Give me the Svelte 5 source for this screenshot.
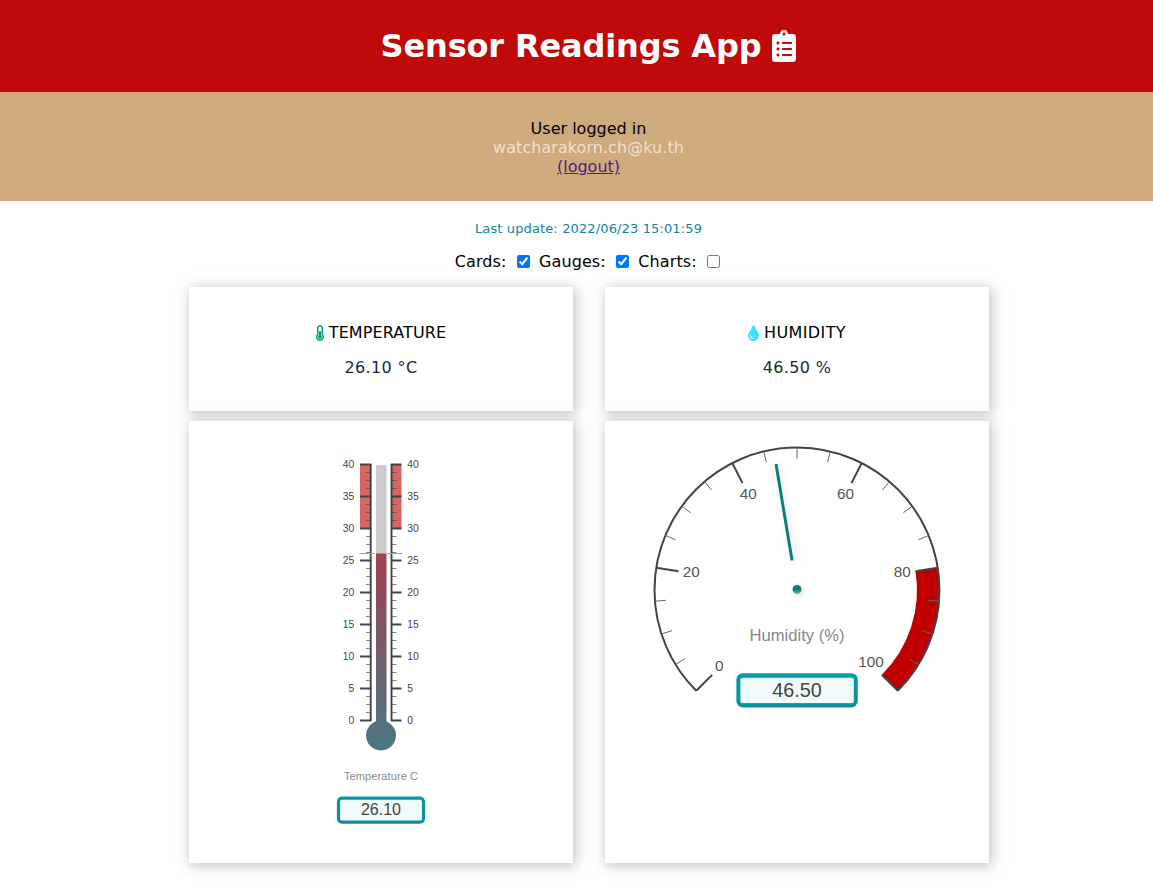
<script>
  let cards = $state(true);
  let gauges = $state(true);
  let charts = $state(false);

  const temperature = 26.1;
  const humidity = 46.5;

  // Thermometer scale: 0 to 40 degrees over 256 px
  const tempY = (v) => 720.5 - v * 6.4;
  const tempMajor = [0, 5, 10, 15, 20, 25, 30, 35, 40];
  const tempMinor = Array.from({ length: 33 }, (_, i) => i * 1.25).filter((v) => v % 5 !== 0);

  // Dial scale: 0 to 100 percent over 270 degrees
  const cx = 797;
  const cy = 590;
  const radius = 142.5;
  const polar = (v, r) => {
    const a = ((-135 + v * 2.7) * Math.PI) / 180;
    return [cx + r * Math.sin(a), cy - r * Math.cos(a)];
  };
  const ray = (v, r1, r2) => `M${polar(v, r1).join(' ')}L${polar(v, r2).join(' ')}`;
  const dialMajor = [0, 20, 40, 60, 80, 100];
  const dialMinor = Array.from({ length: 21 }, (_, i) => i * 5).filter((v) => v % 20 !== 0);
  const dialLabels = [
    [0, 719.3, 671], [20, 691.3, 577.3], [40, 748.3, 499], [60, 845.5, 499], [80, 902.3, 577.3], [100, 871, 667]
  ];
  const arc = `M${polar(0, radius).join(' ')}A${radius} ${radius} 0 1 1 ${polar(100, radius).join(' ')}`;
  const zone = `M${polar(80, radius).join(' ')}A${radius} ${radius} 0 0 1 ${polar(100, radius).join(' ')}L${polar(100, 120).join(' ')}A120 120 0 0 0 ${polar(80, 120).join(' ')}Z`;
</script>

<div class="page">
  <header>
    <h1>
      <span>Sensor Readings App</span>
      <svg width="24" height="32" viewBox="0 0 384 512"><path fill="#fff" d="M336 64h-80c0-35.3-28.7-64-64-64s-64 28.7-64 64H48C21.5 64 0 85.5 0 112v352c0 26.5 21.5 48 48 48h288c26.5 0 48-21.5 48-48V112c0-26.5-21.5-48-48-48zM96 424c-13.3 0-24-10.7-24-24s10.7-24 24-24 24 10.7 24 24-10.7 24-24 24zm0-96c-13.3 0-24-10.7-24-24s10.7-24 24-24 24 10.7 24 24-10.7 24-24 24zm0-96c-13.3 0-24-10.7-24-24s10.7-24 24-24 24 10.7 24 24-10.7 24-24 24zm96-192c13.3 0 24 10.7 24 24s-10.7 24-24 24-24-10.7-24-24 10.7-24 24-24zm128 368c0 4.4-3.6 8-8 8H168c-4.4 0-8-3.6-8-8v-16c0-4.4 3.6-8 8-8h144c4.4 0 8 3.6 8 8v16zm0-96c0 4.4-3.6 8-8 8H168c-4.4 0-8-3.6-8-8v-16c0-4.4 3.6-8 8-8h144c4.4 0 8 3.6 8 8v16zm0-96c0 4.4-3.6 8-8 8H168c-4.4 0-8-3.6-8-8v-16c0-4.4 3.6-8 8-8h144c4.4 0 8 3.6 8 8v16z" /></svg>
    </h1>
  </header>

  <section class="user">
    <div>User logged in</div>
    <div class="email">watcharakorn.ch@ku.th</div>
    <a href="#logout">(logout)</a>
  </section>

  <p class="update">Last update: 2022/06/23 15:01:59</p>

  <div class="toggles">
    <label><span>Cards:</span><input type="checkbox" bind:checked={cards} /></label>
    <label><span>Gauges:</span><input type="checkbox" bind:checked={gauges} /></label>
    <label><span>Charts:</span><input type="checkbox" bind:checked={charts} /></label>
  </div>

  {#if cards}
    <div class="grid">
      <div class="card reading">
        <p class="name">
          <svg width="8" height="16" viewBox="0 0 256 512"><path fill="#059e8a" d="M192 384c0 35.346-28.654 64-64 64s-64-28.654-64-64c0-23.685 12.876-44.349 32-55.417V224c0-17.673 14.327-32 32-32s32 14.327 32 32v104.583c19.124 11.068 32 31.732 32 55.417zm32-84.653c19.912 22.563 32 52.194 32 84.653 0 70.696-57.303 128-128 128-.299 0-.609-.001-.909-.003C56.789 511.509-.357 453.636 0 383.333.166 351.135 12.225 321.755 32 299.347V96c0-53.019 42.981-96 96-96s96 42.981 96 96v203.347zM208 384c0-34.339-19.37-52.19-32-66.502V96c0-26.467-21.533-48-48-48S80 69.533 80 96v221.498c-12.732 14.428-31.825 32.1-31.999 66.08-.224 43.876 35.563 80.116 79.423 80.42L128 464c44.112 0 80-35.888 80-80z" /></svg>
          <span class="tname">TEMPERATURE</span>
        </p>
        <p class="value">{temperature.toFixed(2)} °C</p>
      </div>
      <div class="card reading">
        <p class="name">
          <svg width="11" height="16" viewBox="0 0 352 512"><path fill="#40dfff" d="M205.22 22.09c-7.94-28.78-49.44-30.12-58.44 0C100.01 179.85 0 222.72 0 333.91 0 432.35 78.72 512 176 512s176-79.65 176-178.09c0-111.75-99.79-153.34-146.78-311.82zM176 448c-61.75 0-112-50.25-112-112 0-8.84 7.16-16 16-16s16 7.16 16 16c0 44.11 35.89 80 80 80 8.84 0 16 7.16 16 16s-7.16 16-16 16z" /></svg>
          <span class="hname">HUMIDITY</span>
        </p>
        <p class="value">{humidity.toFixed(2)} %</p>
      </div>
    </div>
  {/if}

  {#if gauges}
    <div class="grid gauges">
      <div class="card gauge">
        <svg width="384" height="442" viewBox="189 421 384 442">
          <defs>
            <linearGradient id="mercury" gradientUnits="userSpaceOnUse" x1="0" y1="553" x2="0" y2="751">
              <stop offset="0" stop-color="#a04050" />
              <stop offset="1" stop-color="#4a7885" />
            </linearGradient>
            <linearGradient id="rim" x1="0" y1="0" x2="0" y2="1">
              <stop offset="0" stop-color="#009ba3" />
              <stop offset="1" stop-color="#158c98" />
            </linearGradient>
          </defs>
          <rect x="360" y="464.5" width="11" height="64" fill="#d96464" />
          <rect x="391" y="464.5" width="10.5" height="64" fill="#d96464" />
          <rect x="376" y="465" width="10.5" height="89" fill="#ccc" />
          <rect x="376" y="553.5" width="10.5" height="175" fill="url(#mercury)" />
          <circle cx="381" cy="735.5" r="15" fill="url(#mercury)" />
          <path d="M370.7 464V721M391.5 464V721" stroke="#444" stroke-width="1.9" fill="none" />
          {#each tempMinor as v}
            <path d="M366 {tempY(v)}h4.5M392 {tempY(v)}h4.5" stroke="#444" stroke-opacity=".65" stroke-width="1.1" />
          {/each}
          {#each tempMajor as v}
            <path d="M360 {tempY(v)}h11.3M391 {tempY(v)}h10.5" stroke="#444" stroke-width="1.9" />
            <text x="354.3" y={tempY(v) + 3.3} text-anchor="end" class="tick">{v}</text>
            <text x="407.3" y={tempY(v) + 3.3} class="tick">{v}</text>
          {/each}
          <rect x="359.5" y="553" width="15" height="1" fill="#f08080" />
          <rect x="387.5" y="553" width="15" height="1" fill="#f08080" />
          <text x="381" y="780" text-anchor="middle" class="tlabel" textLength="74">Temperature C</text>
          <rect x="338.5" y="798.2" width="85" height="24" rx="3.5" fill="#f1fbfc" stroke="url(#rim)" stroke-width="3.2" />
          <text x="381" y="815.2" text-anchor="middle" class="tvalue">{temperature.toFixed(2)}</text>
        </svg>
      </div>
      <div class="card gauge">
        <svg width="384" height="442" viewBox="605 421 384 442">
          <defs>
            <linearGradient id="pin" x1="0" y1="0" x2="0" y2="1">
              <stop offset=".5" stop-color="#008080" />
              <stop offset="1" stop-color="#80b8b8" />
            </linearGradient>
            <linearGradient id="rim2" x1="0" y1="0" x2="0" y2="1">
              <stop offset="0" stop-color="#009ba3" />
              <stop offset="1" stop-color="#0a929c" />
            </linearGradient>
            <filter id="soft" x="-200%" y="-50%" width="500%" height="200%">
              <feDropShadow dx="2" dy="2" stdDeviation="3" flood-color="#bc8f8f" flood-opacity=".3" />
            </filter>
          </defs>
          <path d={zone} fill="#c00000" />
          <path d={arc} fill="none" stroke="#444" stroke-width="2" />
          {#each dialMinor as v}
            <path d={ray(v, 131.5, radius)} stroke="#666" stroke-width="1" />
          {/each}
          {#each dialMajor as v}
            <path d={ray(v, 120, radius)} stroke="#444" stroke-width="2" />
          {/each}
          {#each dialLabels as [v, x, y]}
            <text {x} {y} text-anchor="middle" class="dtick">{v}</text>
          {/each}
          <path d={ray(humidity, 30, 127.7)} stroke="#008080" stroke-width="3" filter="url(#soft)" />
          <circle {cx} cy="589.5" r="4.5" fill="url(#pin)" filter="url(#soft)" />
          <text x="797" y="641" text-anchor="middle" class="dlabel">Humidity (%)</text>
          <rect x="738.4" y="675.2" width="117.4" height="30.2" rx="4.5" fill="#f1fbfc" stroke="url(#rim2)" stroke-width="4" />
          <path d="M741 677.7h112.5M741 703.5h112.5" stroke="#356f75" stroke-width="1" stroke-opacity=".65" />
          <text x="797" y="697" text-anchor="middle" class="dvalue">{humidity.toFixed(2)}</text>
        </svg>
      </div>
    </div>
  {/if}
</div>

<style>
  :global(body) {
    margin: 0;
    overflow: hidden;
    background: #fff;
  }
  .page {
    width: 1177px;
    height: 885px;
    font: 16px/19px "DejaVu Sans", sans-serif;
    color: #000;
    text-align: center;
  }
  header {
    height: 92px;
    background: #c00a0a;
    color: #fff;
  }
  h1 {
    margin: 0;
    height: 92px;
    display: flex;
    align-items: center;
    justify-content: center;
    gap: 11px;
    font-size: 32px;
    line-height: 38px;
    letter-spacing: -0.15px;
  }
  .user {
    box-sizing: border-box;
    height: 109px;
    padding-top: 27px;
    background: #cfaa7c;
  }
  .email {
    color: #f0dfd0;
    letter-spacing: 0.06px;
  }
  a { color: #551a8b; }
  .update {
    margin: 20px 0 0;
    font-size: 13px;
    line-height: 16px;
    letter-spacing: 0.13px;
    color: #1282a2;
  }
  .toggles {
    display: flex;
    justify-content: center;
    gap: 9px;
    width: 1175px;
    height: 20px;
    margin-top: 14px;
    letter-spacing: 0.1px;
  }
  label {
    display: flex;
    align-items: center;
    gap: 10.5px;
  }
  input {
    margin: 0;
    width: 13px;
    height: 13px;
  }
  .grid {
    display: grid;
    grid-template-columns: 384px 384px;
    gap: 32px;
    justify-content: center;
    width: 800px;
    margin: 16px 0 0 189px;
  }
  .gauges { margin-top: 10px; }
  .card {
    background: #fff;
    box-shadow: 2px 2px 12px 1px rgba(140, 140, 140, 0.5);
  }
  .reading {
    box-sizing: border-box;
    height: 124px;
    padding-top: 36px;
  }
  .name {
    display: flex;
    justify-content: center;
    align-items: center;
    gap: 5px;
    margin: 0 0 16px;
  }
  .tname { letter-spacing: 0.1px; }
  .hname { letter-spacing: 0.4px; }
  .value {
    margin: 0;
    letter-spacing: 0.35px;
    color: #1b2838;
  }
  .gauge { height: 442px; }
  .gauge svg { display: block; }
  text {
    font-family: "Liberation Sans", Arial, sans-serif;
    fill: #444;
  }
  .tick { font-size: 10.3px; }
  .tlabel { font-size: 11px; fill: #888; }
  .tvalue { font-size: 16px; }
  .dtick { font-size: 15.3px; fill: #555; }
  .dlabel { font-size: 16.6px; fill: #888; }
  .dvalue { font-size: 19.8px; }
</style>
